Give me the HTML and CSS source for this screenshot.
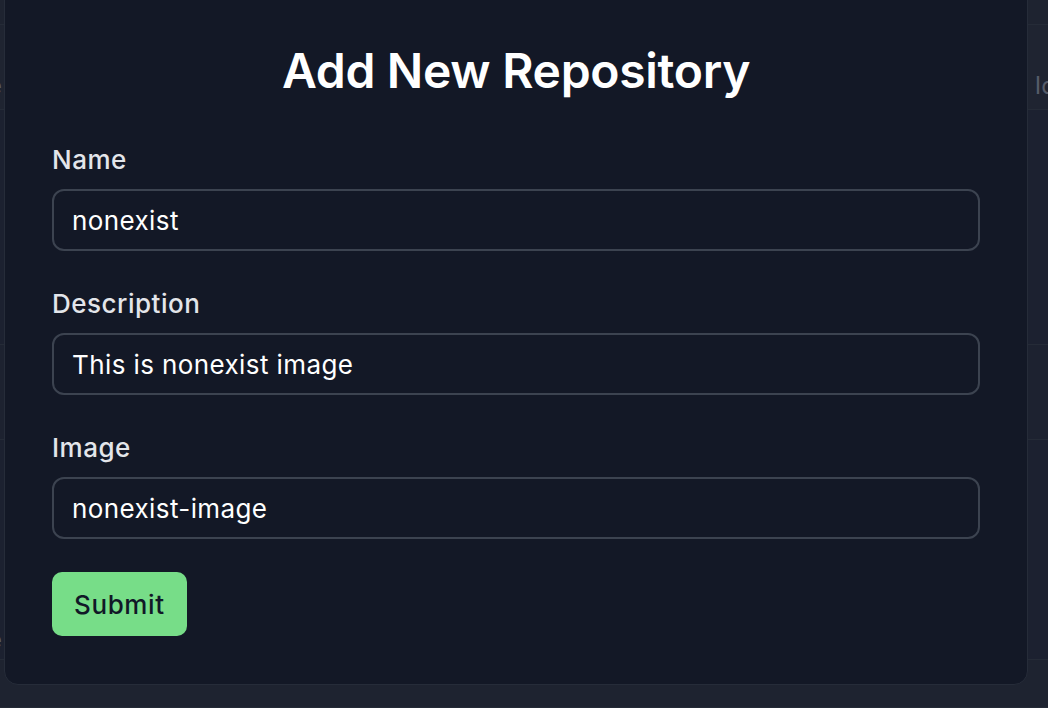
FILE: index.html
```html
<!DOCTYPE html>
<html lang="en">
<head>
<meta charset="utf-8">
<title>Add New Repository</title>
<link rel="stylesheet" href="styles.css">
</head>
<body>
<div class="page">
  <div class="table">
    <div class="row row-top"></div>
    <div class="row row-head"><span class="cell-left">e</span><span class="cell-right">Id</span></div>
    <div class="row row-a"></div>
    <div class="row row-b"></div>
    <div class="row row-c"><span class="cell-left">e</span></div>
    <div class="row row-d"></div>
  </div>
</div>
<div class="overlay">
  <div class="modal">
    <h1 class="title">Add New Repository</h1>
    <form class="form">
      <label class="field">
        <span class="label">Name</span>
        <input class="input" type="text" value="nonexist">
      </label>
      <label class="field">
        <span class="label">Description</span>
        <input class="input" type="text" value="This is nonexist image">
      </label>
      <label class="field">
        <span class="label">Image</span>
        <input class="input" type="text" value="nonexist-image">
      </label>
      <div class="actions">
        <button class="submit" type="button">Submit</button>
      </div>
    </form>
  </div>
</div>
</body>
</html>
```

FILE: styles.css
```css
* { box-sizing: border-box; }
html, body {
  margin: 0;
  padding: 0;
  width: 1048px;
  height: 708px;
  overflow: hidden;
  background: #1e2330;
  font-family: Inter, "Noto Sans", "Liberation Sans", sans-serif;
}
.page {
  width: 1048px;
  height: 708px;
  background: #1c212c;
}
.table {
  display: flex;
  flex-direction: column;
}
.row {
  border-bottom: 1px solid #252b37;
  display: flex;
  justify-content: space-between;
  align-items: flex-end;
  color: #565c69;
  font-size: 24px;
  line-height: 30px;
}
.row-top { height: 25px; background: #1e2330; }
.row-head { height: 85px; padding-bottom: 8px; background: #1f2431; }
.row-a { height: 235px; background: #1c2130; }
.row-b { height: 95px; background: #1d2230; }
.row-c { height: 220px; padding-bottom: 4px; background: #1c2130; }
.row-d { height: 48px; background: #1e2330; }
.cell-left { margin-left: -12px; }
.cell-right { margin-right: -8px; }

.overlay {
  position: absolute;
  left: 4px;
  top: -20px;
  width: 1024px;
}
.modal {
  background: #131826;
  border: 1px solid #262c39;
  border-radius: 14px;
  padding: 60px 47px 48px 47px;
}
.title {
  margin: 0 0 43px 0;
  text-align: center;
  color: #ffffff;
  font-size: 48px;
  font-weight: 600;
  line-height: 60px;
  letter-spacing: -0.3px;
}
.form {
  display: flex;
  flex-direction: column;
  gap: 37px;
}
.field {
  display: flex;
  flex-direction: column;
  gap: 13px;
}
.label {
  color: #e3e5ea;
  font-size: 26px;
  font-weight: 500;
  line-height: 32px;
  letter-spacing: 0.5px;
}
.input {
  height: 62px;
  width: 100%;
  background: #131826;
  border: 2px solid #3c4350;
  border-radius: 12px;
  padding: 0 18px;
  color: #ffffff;
  font-family: inherit;
  font-size: 26px;
  letter-spacing: 0.4px;
  outline: none;
}
.actions {
  margin-top: -4px;
  display: flex;
}
.submit {
  height: 64px;
  padding: 0 22px;
  background: #77dd88;
  border: none;
  border-radius: 10px;
  color: #111827;
  font-family: inherit;
  font-size: 26px;
  font-weight: 500;
  letter-spacing: 0.6px;
}
```
